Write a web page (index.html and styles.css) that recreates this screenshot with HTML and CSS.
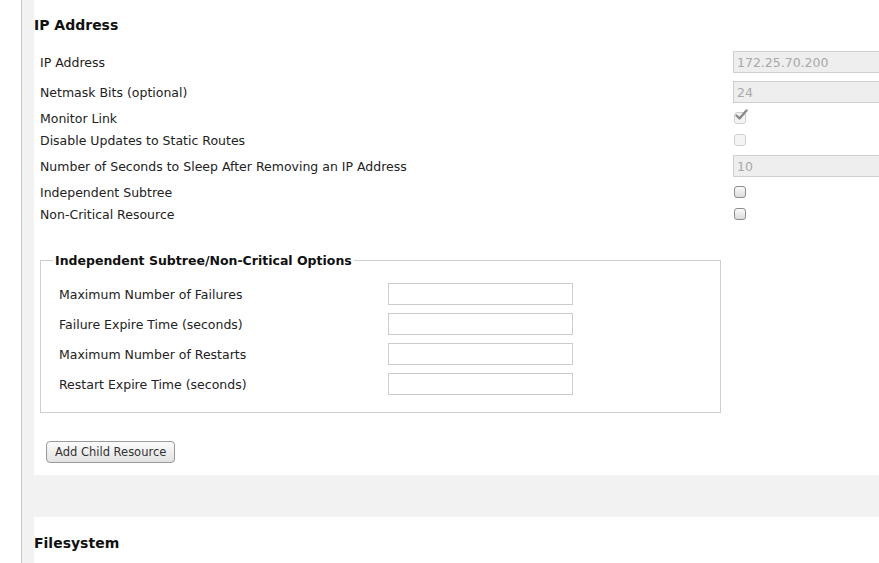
FILE: index.html
```html
<!DOCTYPE html>
<html>
<head>
<meta charset="utf-8">
<link rel="stylesheet" href="styles.css">
</head>
<body>
<div class="page">
  <div class="gutter"></div>
  <div class="rail">
    <section class="panel panel-ip">
      <h2 class="panel-title">IP Address</h2>
      <div class="form">
        <div class="row row-input"><span class="label">IP Address</span><input class="field" type="text" value="172.25.70.200" disabled></div>
        <div class="row row-input"><span class="label">Netmask Bits (optional)</span><input class="field" type="text" value="24" disabled></div>
        <div class="row row-check"><span class="label">Monitor Link</span>
          <span class="check check-disabled check-on"><svg class="tick" viewBox="0 0 14 12" width="14" height="12"><path d="M2.5 6.5 L5.5 9.5 L12.5 1.5" fill="none" stroke="#8a8a8a" stroke-width="2.4" stroke-linecap="round" stroke-linejoin="round"/></svg></span></div>
        <div class="row row-check"><span class="label">Disable Updates to Static Routes</span><span class="check check-disabled"></span></div>
        <div class="row row-input"><span class="label">Number of Seconds to Sleep After Removing an IP Address</span><input class="field" type="text" value="10" disabled></div>
        <div class="row row-check"><span class="label">Independent Subtree</span><span class="check"></span></div>
        <div class="row row-check"><span class="label">Non-Critical Resource</span><span class="check"></span></div>
      </div>
      <fieldset class="options">
        <legend class="options-title">Independent Subtree/Non-Critical Options</legend>
        <div class="opt-row"><span class="opt-label">Maximum Number of Failures</span><input class="opt-field" type="text"></div>
        <div class="opt-row"><span class="opt-label">Failure Expire Time (seconds)</span><input class="opt-field" type="text"></div>
        <div class="opt-row"><span class="opt-label">Maximum Number of Restarts</span><input class="opt-field" type="text"></div>
        <div class="opt-row"><span class="opt-label">Restart Expire Time (seconds)</span><input class="opt-field" type="text"></div>
      </fieldset>
      <div class="actions"><button class="btn" type="button">Add Child Resource</button></div>
    </section>
    <div class="band"></div>
    <section class="panel panel-fs">
      <h2 class="panel-title">Filesystem</h2>
    </section>
  </div>
</div>
</body>
</html>
```
FILE: styles.css
```css
html, body {
  margin: 0;
  padding: 0;
  background: #ffffff;
  overflow: hidden;
  height: 563px;
}
body {
  font-family: "DejaVu Sans", "Liberation Sans", sans-serif;
  font-size: 12.5px;
  color: #222;
}
.page {
  display: flex;
  width: 879px;
  height: 563px;
}
.gutter {
  width: 21px;
  flex: none;
  background: #ffffff;
}
.rail {
  flex: 1;
  border-left: 1px solid #c9c9c9;
  background: #f2f2f2;
  padding-left: 12px;
  display: flex;
  flex-direction: column;
  min-width: 0;
}
.panel {
  background: #ffffff;
  min-width: 0;
  overflow: hidden;
}
.panel-ip {
  height: 475px;
  box-sizing: border-box;
}
.band {
  height: 42px;
  flex: none;
}
.panel-fs {
  flex: 1;
}
.panel-title {
  margin: 0;
  font-size: 14px;
  font-weight: bold;
  color: #111;
  height: 47px;
  line-height: 50px;
}
.panel-fs .panel-title {
  height: 52px;
  line-height: 53px;
}
.form {
  padding-left: 6px;
}
.row {
  display: flex;
  align-items: center;
}
.row-input { height: 30px; }
.row-check { height: 22px; }
.label {
  width: 693px;
  flex: none;
  color: #222;
}
.field {
  box-sizing: border-box;
  width: 170px;
  height: 22px;
  margin: 0;
  padding: 0 3px;
  border: 1px solid #cfcfcf;
  background: #eeeeee;
  font-family: "DejaVu Sans", "Liberation Sans", sans-serif;
  font-size: 12.5px;
  color: #a8a8a8;
  -webkit-text-fill-color: #a8a8a8;
  opacity: 1;
}
.check {
  box-sizing: border-box;
  width: 12px;
  height: 12px;
  margin-left: 1px;
  border: 1px solid #8d8d8d;
  border-radius: 3px;
  background: linear-gradient(#fafafa, #dcdcdc);
  position: relative;
}
.check-disabled {
  border-color: #cfcfcf;
  background: #f4f4f4;
}
.tick {
  position: absolute;
  left: -1px;
  top: -4px;
}
.options {
  margin: 28px 0 0 6px;
  width: 681px;
  box-sizing: border-box;
  border: 1px solid #cdd0d3;
  padding: 11px 12px 13px 12px;
}
.options-title {
  padding: 0 2px;
  font-size: 12.5px;
  font-weight: bold;
  color: #111;
}
.opt-row {
  display: flex;
  align-items: center;
  height: 30px;
  padding-left: 6px;
}
.opt-label {
  width: 329px;
  flex: none;
  color: #222;
}
.opt-field {
  box-sizing: border-box;
  width: 185px;
  height: 22px;
  margin: 0;
  border: 1px solid #c9ccd0;
  background: #ffffff;
}
.actions {
  padding: 28px 0 0 12px;
}
.btn {
  box-sizing: border-box;
  height: 22px;
  padding: 0 8px;
  border: 1px solid #9a9a9a;
  border-radius: 4px;
  background: linear-gradient(#fbfbfb, #e2e2e2);
  font-family: "DejaVu Sans", "Liberation Sans", sans-serif;
  font-size: 11.5px;
  color: #333;
}
```
